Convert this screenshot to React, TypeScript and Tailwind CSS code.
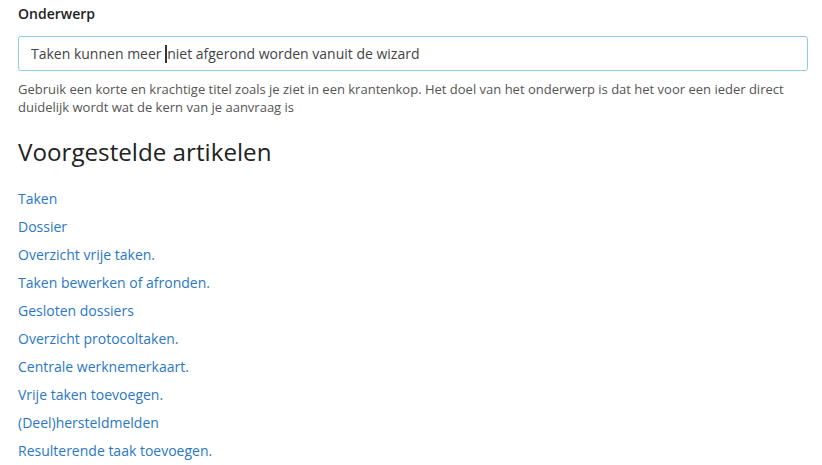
import React from "react";

const links = [
  "Taken",
  "Dossier",
  "Overzicht vrije taken.",
  "Taken bewerken of afronden.",
  "Gesloten dossiers",
  "Overzicht protocoltaken.",
  "Centrale werknemerkaart.",
  "Vrije taken toevoegen.",
  "(Deel)hersteldmelden",
  "Resulterende taak toevoegen.",
];

export default function App() {
  return (
    <div className="bg-white w-[822px] h-[465px] overflow-hidden text-[#333]" style={{ fontFamily: '"Open Sans", sans-serif' }}>
      <div className="pl-[18px] pr-[14px] pt-[4px]">
        <div className="text-[14px] font-semibold leading-[20px] text-[#222]">Onderwerp</div>
        <div className="mt-[12px] h-[35px] w-[790px] rounded-[3px] border border-[#8ccfe4] flex items-center pl-[12px] text-[14px] text-[#444] whitespace-pre">
          <span>Taken kunnen meer </span>
          <span className="w-[2px] h-[18px] bg-[#333]" />
          <span>niet afgerond worden vanuit de wizard</span>
        </div>
        <p className="mt-[9px] text-[13px] leading-[18px] text-[#555] w-[780px]">
          Gebruik een korte en krachtige titel zoals je ziet in een krantenkop. Het doel van het onderwerp is dat het voor een ieder direct duidelijk wordt wat de kern van je aanvraag is
        </p>
        <h2 className="mt-[20px] text-[24.2px] leading-[32px] text-[#222] font-normal">Voorgestelde artikelen</h2>
        <div className="mt-[17px] flex flex-col">
          {links.map((l) => (
            <a key={l} className="text-[14px] leading-[28px] text-[#2a77c6]">{l}</a>
          ))}
        </div>
      </div>
    </div>
  );
}
